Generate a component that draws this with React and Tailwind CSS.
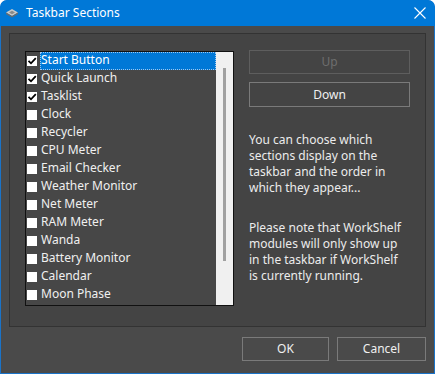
import React from "react";

const items = [
  ["Start Button", true],
  ["Quick Launch", true],
  ["Tasklist", true],
  ["Clock", false],
  ["Recycler", false],
  ["CPU Meter", false],
  ["Email Checker", false],
  ["Weather Monitor", false],
  ["Net Meter", false],
  ["RAM Meter", false],
  ["Wanda", false],
  ["Battery Monitor", false],
  ["Calendar", false],
  ["Moon Phase", false],
];

function Check() {
  return (
    <svg width="10" height="10" viewBox="0 0 10 10">
      <path d="M1.5 4.8 L4 7.3 L8.8 2.2" stroke="#000" strokeWidth="1.8" fill="none" />
    </svg>
  );
}

export default function App() {
  const font = { fontFamily: '"Noto Sans", "Open Sans", sans-serif' };
  return (
    <div
      className="w-[435px] h-[374px] bg-[#1a73c8] rounded-t-[7px] flex flex-col px-[1px] pb-[1px] text-[12px] overflow-hidden"
      style={font}
    >
      <div className="h-[26px] flex items-center bg-[#0078d7] rounded-t-[7px] -mx-[1px] px-[5px] shrink-0">
        <svg width="14" height="10" viewBox="0 0 14 10" className="mr-[7px]">
          <path d="M7 1 L13 4.5 L7 8 L1 4.5 Z" fill="#c9c9c9" />
          <path d="M1 4.5 L7 8 L13 4.5 L13 6 L7 9.5 L1 6 Z" fill="#6b6b6b" />
          <path d="M4 4.5 L7 2.8 L10 4.5 L7 6.2 Z" fill="#8a8a8a" />
        </svg>
        <span className="text-white leading-none">Taskbar Sections</span>
        <div className="flex-1" />
        <svg width="12" height="12" viewBox="0 0 12 12" className="mr-[4px]">
          <path d="M0.5 0.5 L11.5 11.5 M11.5 0.5 L0.5 11.5" stroke="#fff" strokeWidth="1.1" />
        </svg>
      </div>
      <div className="flex-1 bg-[#4a4a4a] flex flex-col pl-[8px] pr-[8px] pt-[7px]">
        <div className="w-[417px] h-[294px] border border-[#333333] bg-[#444444] flex pl-[15px] pt-[17px]">
          <div className="w-[209px] h-[255px] border border-[#111111] bg-[#474747] flex">
            <div className="w-[190px] flex flex-col pt-0">
              {items.map(([label, checked], i) => (
                <div key={label} className="h-[18px] flex items-center">
                  <div className="w-[10px] h-[10px] bg-white ml-[1px] flex items-center justify-center">
                    {checked && <Check />}
                  </div>
                  <div
                    className={
                      "ml-[3px] flex-1 h-[18px] flex items-center pl-[1px] pb-[2px] leading-none " +
                      (i === 0
                        ? "bg-[#0078d7] outline outline-1 outline-dotted outline-[#9ec7ee] -outline-offset-1 text-white"
                        : "text-[#f0f0f0]")
                    }
                  >
                    {label}
                  </div>
                </div>
              ))}
            </div>
            <div className="w-[17px] bg-[#f0f0f0] flex justify-center pt-[16px]">
              <div className="w-[3px] h-[193px] bg-[#a0a0a0]" />
            </div>
          </div>
          <div className="flex flex-col pl-[15px] -mt-[1px]">
            <div className="w-[161px] h-[24px] border border-[#5e5e5e] flex items-center justify-center text-[#6e6e6e] leading-none">
              Up
            </div>
            <div className="w-[161px] h-[25px] border border-[#7a7a7a] mt-[8px] flex items-center justify-center text-[#f0f0f0] leading-none">
              Down
            </div>
            <div className="mt-[25px] leading-[16px] text-[#ececec] whitespace-nowrap">
              You can choose which
              <br />
              sections display on the
              <br />
              taskbar and the order in
              <br />
              which they appear...
            </div>
            <div className="mt-[24px] leading-[16px] text-[#ececec] whitespace-nowrap">
              Please note that WorkShelf
              <br />
              modules will only show up
              <br />
              in the taskbar if WorkShelf
              <br />
              is currently running.
            </div>
          </div>
        </div>
        <div className="flex justify-end gap-[8px] mt-[10px]">
          <div className="w-[87px] h-[24px] border border-[#7a7a7a] flex items-center justify-center text-[#f0f0f0] leading-none">
            OK
          </div>
          <div className="w-[89px] h-[24px] border border-[#7a7a7a] flex items-center justify-center text-[#f0f0f0] leading-none">
            Cancel
          </div>
        </div>
      </div>
    </div>
  );
}
